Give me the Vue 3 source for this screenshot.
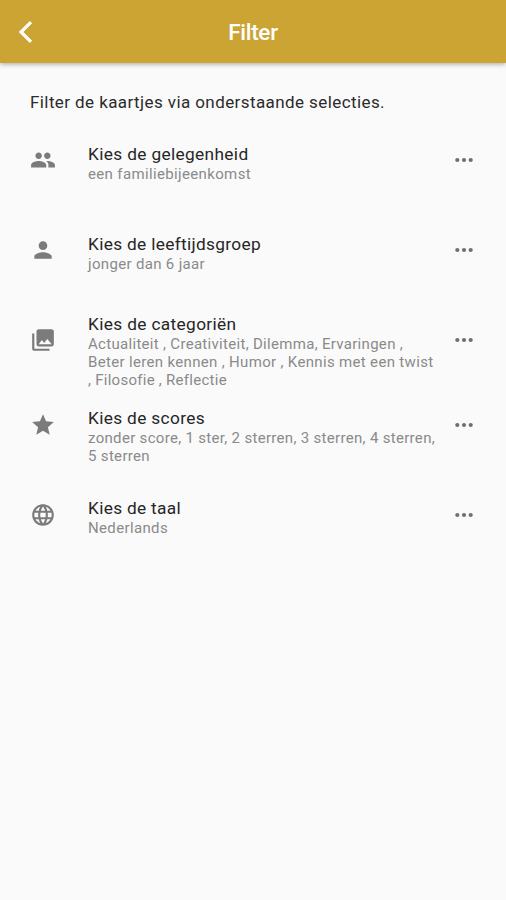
<template>
  <div class="page">
    <header class="app-bar">
      <button class="back" aria-label="Terug">
        <svg viewBox="0 0 15 22" width="15" height="22">
          <path d="M13 1.2 3 11 13 20.8" fill="none" stroke="#fff" stroke-width="3.2" />
        </svg>
      </button>
      <h1 class="title">Filter</h1>
    </header>

    <main class="content">
      <p class="intro"><span v-fit="355">Filter de kaartjes via onderstaande selecties.</span></p>

      <ul class="filters">
        <li
          v-for="item in filters"
          :key="item.icon"
          class="filter"
          :class="{ tall: item.lines.length > 2 }"
        >
          <svg class="icon" viewBox="0 0 24 24" width="26" height="26">
            <path :d="icons[item.icon]" />
          </svg>
          <div class="text">
            <div class="name"><span v-fit="item.nameWidth">{{ item.name }}</span></div>
            <div v-for="line in item.lines" :key="line.text" class="line">
              <span v-fit="line.width">{{ line.text }}</span>
            </div>
          </div>
          <svg class="more" viewBox="0 0 20 6" width="20" height="6">
            <circle cx="3.3" cy="3" r="2.1" />
            <circle cx="10" cy="3" r="2.1" />
            <circle cx="16.7" cy="3" r="2.1" />
          </svg>
        </li>
      </ul>
    </main>
  </div>
</template>

<script setup>
const icons = {
  people:
    "M16 11c1.66 0 2.99-1.34 2.99-3S17.66 5 16 5s-3 1.34-3 3 1.34 3 3 3zm-8 0c1.66 0 2.99-1.34 2.99-3S9.66 5 8 5 5 6.34 5 8s1.34 3 3 3zm0 2c-2.33 0-7 1.17-7 3.5V19h14v-2.5c0-2.33-4.67-3.5-7-3.5zm8 0c-.29 0-.62.02-.97.05 1.16.84 1.97 1.97 1.97 3.45V19h6v-2.5c0-2.33-4.67-3.5-7-3.5z",
  person:
    "M12 12c2.21 0 4-1.79 4-4s-1.79-4-4-4-4 1.79-4 4 1.79 4 4 4zm0 2c-2.67 0-8 1.34-8 4v2h16v-2c0-2.66-5.33-4-8-4z",
  library:
    "M22 16V4c0-1.1-.9-2-2-2H8c-1.1 0-2 .9-2 2v12c0 1.1.9 2 2 2h12c1.1 0 2-.9 2-2zm-11-4l2.03 2.71L16 11l4 5H8l3-4zM2 6v14c0 1.1.9 2 2 2h14v-2H4V6H2z",
  star: "M12 17.27L18.18 21l-1.64-7.03L22 9.24l-7.19-.61L12 2 9.19 8.63 2 9.24l5.46 4.73L5.82 21z",
  language:
    "M11.99 2C6.47 2 2 6.48 2 12s4.47 10 9.99 10C17.52 22 22 17.52 22 12S17.52 2 11.99 2zm6.93 6h-2.95c-.32-1.25-.78-2.45-1.38-3.56 1.84.63 3.37 1.91 4.33 3.56zM12 4.04c.83 1.2 1.48 2.53 1.91 3.96h-3.82c.43-1.43 1.08-2.76 1.91-3.96zM4.26 14C4.1 13.36 4 12.69 4 12s.1-1.36.26-2h3.38c-.08.66-.14 1.32-.14 2s.06 1.34.14 2H4.26zm.82 2h2.95c.32 1.25.78 2.45 1.38 3.56-1.84-.63-3.37-1.9-4.33-3.56zm2.95-8H5.08c.96-1.66 2.49-2.93 4.33-3.56C8.81 5.55 8.35 6.75 8.03 8zM12 19.96c-.83-1.2-1.48-2.53-1.91-3.96h3.82c-.43 1.43-1.08 2.76-1.91 3.96zM14.34 14H9.66c-.09-.66-.16-1.32-.16-2s.07-1.35.16-2h4.68c.09.65.16 1.32.16 2s-.07 1.34-.16 2zm.25 5.56c.6-1.11 1.06-2.31 1.38-3.56h2.95c-.96 1.65-2.49 2.93-4.33 3.56zM16.36 14c.08-.66.14-1.32.14-2s-.06-1.34-.14-2h3.38c.16.64.26 1.31.26 2s-.1 1.36-.26 2h-3.38z",
};

const filters = [
  {
    icon: "people",
    name: "Kies de gelegenheid",
    nameWidth: 160.5,
    lines: [{ text: "een familiebijeenkomst", width: 163 }],
  },
  {
    icon: "person",
    name: "Kies de leeftijdsgroep",
    nameWidth: 173,
    lines: [{ text: "jonger dan 6 jaar", width: 117 }],
  },
  {
    icon: "library",
    name: "Kies de categoriën",
    nameWidth: 148.5,
    lines: [
      { text: "Actualiteit , Creativiteit, Dilemma, Ervaringen ,", width: 315 },
      { text: "Beter leren kennen , Humor , Kennis met een twist", width: 345.5 },
      { text: ", Filosofie , Reflectie", width: 138 },
    ],
  },
  {
    icon: "star",
    name: "Kies de scores",
    nameWidth: 117,
    lines: [
      { text: "zonder score, 1 ster, 2 sterren, 3 sterren, 4 sterren,", width: 347 },
      { text: "5 sterren", width: 62 },
    ],
  },
  {
    icon: "language",
    name: "Kies de taal",
    nameWidth: 93,
    lines: [{ text: "Nederlands", width: 80 }],
  },
];

// spreads the letters so a line takes the given width
const vFit = {
  mounted(el, { value }) {
    const gap = (value - el.getBoundingClientRect().width) / el.textContent.length;
    el.style.letterSpacing = gap + "px";
  },
};
</script>

<style>
body {
  margin: 0;
  background: #fafafa;
}
</style>

<style scoped>
.page {
  min-height: 100vh;
  background: #fafafa;
  font-family: Roboto, "Liberation Sans", sans-serif;
}

.app-bar {
  display: grid;
  grid-template-columns: 60px 1fr 60px;
  align-items: center;
  height: 63px;
  padding-top: 1px;
  box-sizing: border-box;
  background: #cca434;
  box-shadow: 0 1px 5px rgba(0, 0, 0, 0.35);
}

.back {
  display: flex;
  width: 60px;
  padding: 0 0 0 18px;
  border: 0;
  background: none;
}

.title {
  margin: 0;
  color: #fff;
  font-size: 22.5px;
  font-weight: 500;
  line-height: 28px;
  letter-spacing: -0.3px;
  text-align: center;
}

.content {
  padding: 28px 30px 0;
}

.intro {
  margin: 0;
  color: #2b2b2b;
  font-size: 17px;
  line-height: 22px;
  white-space: nowrap;
}

.filters {
  margin: 2px 0 0;
  padding: 0;
  list-style: none;
}

.filter {
  display: grid;
  grid-template-columns: 58px 1fr 22px;
  align-items: start;
  height: 90px;
}

.filter.tall {
  height: 84.5px;
}

.icon,
.more {
  fill: #7b7b7b;
}

.icon {
  margin-top: 32px;
}

.more {
  margin-top: 42px;
  fill: #6f6f6f;
}

.text {
  padding-top: 27.6px;
  white-space: nowrap;
}

.tall .text {
  padding-top: 17.6px;
}

.name {
  color: #262626;
  font-size: 17.3px;
  line-height: 22px;
}

.line {
  color: #8a8a8a;
  font-size: 15px;
  line-height: 18px;
}
</style>
